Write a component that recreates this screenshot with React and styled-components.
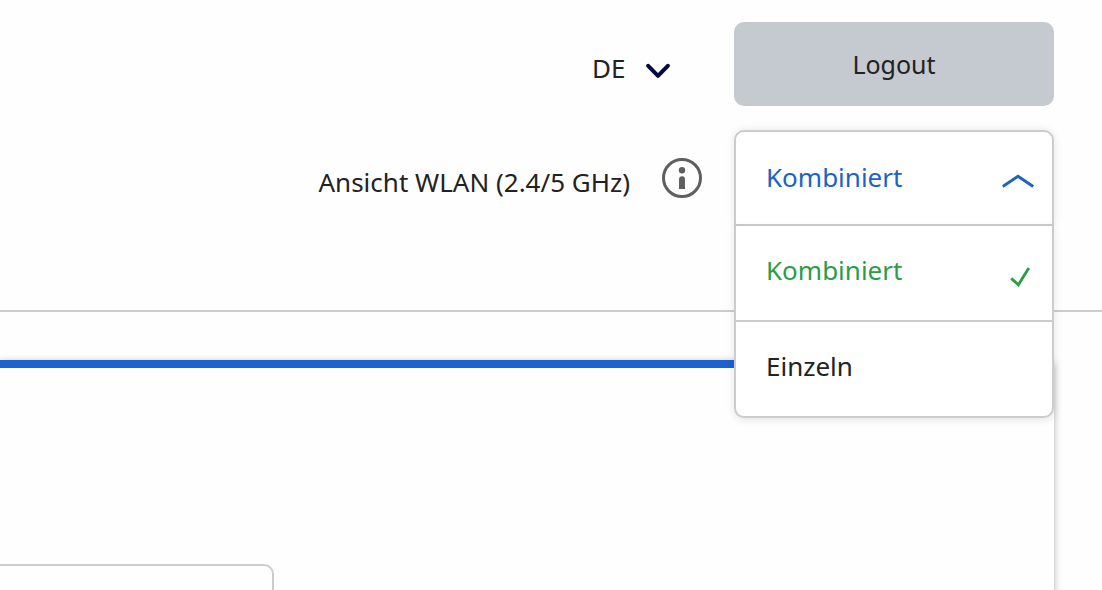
import { useState } from "react";
import styled, { createGlobalStyle } from "styled-components";

const views = ["Kombiniert", "Einzeln"];

export default function App() {
  const [open, setOpen] = useState(true);
  const [view, setView] = useState("Kombiniert");
  const choose = (name) => {
    setView(name);
    setOpen(false);
  };
  return (
    <>
      <GlobalStyle />
      <Page>
        <Header>
          <TopRow>
            <Language>
              <select aria-label="Sprache" defaultValue="DE">
                <option>DE</option>
                <option>FR</option>
                <option>IT</option>
                <option>EN</option>
              </select>
              <svg width="24" height="16" viewBox="0 0 24 16" fill="none" aria-hidden="true">
                <path
                  d="M2.2 2.8 12 12.8 21.8 2.8"
                  stroke="#020b41"
                  strokeWidth="4"
                  strokeLinecap="round"
                  strokeLinejoin="round"
                />
              </svg>
            </Language>
            <Logout type="button">Logout</Logout>
          </TopRow>
          <ViewRow>
            <ViewLabel id="view-label">Ansicht WLAN (2.4/5 GHz)</ViewLabel>
            <InfoButton type="button" aria-label="Info">
              <svg width="40" height="40" viewBox="0 0 40 40" aria-hidden="true">
                <circle cx="20" cy="20" r="18.5" fill="none" stroke="#5f5f5f" strokeWidth="3" />
                <circle cx="20" cy="12.3" r="3.2" fill="#5f5f5f" />
                <path d="M17 31V21.2a3 3 0 0 1 6 0V31z" fill="#5f5f5f" />
              </svg>
            </InfoButton>
            <Dropdown>
              <DropdownHead
                type="button"
                aria-haspopup="listbox"
                aria-expanded={open}
                aria-labelledby="view-label view-value"
                $open={open}
                onClick={() => setOpen(!open)}
              >
                <span id="view-value">{view}</span>
                <svg width="32" height="16" viewBox="0 0 32 16" fill="none" aria-hidden="true">
                  <path d="M.8 13.4 16 3.2 31.2 13.4" stroke="#1c63c4" strokeWidth="3" />
                </svg>
              </DropdownHead>
              {open && (
                <Menu role="listbox" aria-labelledby="view-label">
                  {views.map((name) => (
                    <Option
                      key={name}
                      type="button"
                      role="option"
                      aria-selected={name === view}
                      $selected={name === view}
                      onClick={() => choose(name)}
                    >
                      <span>{name}</span>
                      {name === view && (
                        <svg width="20" height="20" viewBox="0 0 20 20" fill="none" aria-hidden="true">
                          <path d="M1.2 11.4 8.4 17.8 18.8 1" stroke="#2a9d48" strokeWidth="2.8" />
                        </svg>
                      )}
                    </Option>
                  ))}
                </Menu>
              )}
            </Dropdown>
          </ViewRow>
        </Header>
        <Main>
          <Card>
            <Panel />
          </Card>
        </Main>
      </Page>
    </>
  );
}

const GlobalStyle = createGlobalStyle`
  * {
    box-sizing: border-box;
  }
  body {
    margin: 0;
    background: #fefefe;
    color: #222;
    font: 26px/36px "Noto Sans", "Open Sans", sans-serif;
  }
  button,
  select {
    padding: 0;
    border: 0;
    background: none;
    color: inherit;
    font: inherit;
    cursor: pointer;
  }
`;

const Page = styled.div`
  display: flex;
  flex-direction: column;
  height: 100vh;
  overflow: hidden;
`;

const Header = styled.header`
  display: flex;
  flex-direction: column;
  gap: 24px;
  padding: 22px 48px 84px 0;
  border-bottom: 2px solid #ccc;
`;

const TopRow = styled.div`
  display: flex;
  align-items: center;
  justify-content: flex-end;
  gap: 64px;
`;

const Language = styled.div`
  display: grid;
  align-items: center;
  width: 78px;
  padding-top: 8px;
  select {
    grid-area: 1 / 1;
    appearance: none;
  }
  svg {
    grid-area: 1 / 1;
    justify-self: end;
    margin-top: 6px;
    pointer-events: none;
  }
`;

const Logout = styled.button`
  width: 320px;
  height: 84px;
  border-radius: 10px;
  background: #c4cacf;
  font-size: 25px;
`;

const ViewRow = styled.div`
  display: flex;
  align-items: center;
  justify-content: flex-end;
  gap: 32px;
`;

const ViewLabel = styled.span`
  padding-top: 8px;
`;

const InfoButton = styled.button`
  display: flex;
`;

const Dropdown = styled.div`
  position: relative;
  width: 320px;
`;

const DropdownHead = styled.button`
  display: flex;
  align-items: center;
  justify-content: space-between;
  width: 100%;
  height: 96px;
  padding: 0 18px 0 30px;
  border: 2px solid #ccc;
  border-radius: ${({ $open }) => ($open ? "10px 10px 0 0" : "10px")};
  background: #fff;
  color: #1c63c4;
  box-shadow: 0 0 8px rgba(0, 0, 0, 0.1);
  span {
    padding-bottom: 2px;
  }
  svg {
    margin-top: 6px;
  }
`;

const Menu = styled.div`
  position: absolute;
  z-index: 1;
  top: 100%;
  left: 0;
  right: 0;
  border: 2px solid #ccc;
  border-top: 0;
  border-radius: 0 0 10px 10px;
  background: #fff;
  box-shadow: 0 2px 8px rgba(0, 0, 0, 0.1);
`;

const Option = styled.button`
  display: flex;
  align-items: center;
  justify-content: space-between;
  width: 100%;
  height: 94px;
  padding: 0 22px 0 30px;
  color: ${({ $selected }) => ($selected ? "#2a9d48" : "#222")};
  span {
    padding-bottom: 6px;
  }
  svg {
    margin-top: 8px;
  }
  & + & {
    height: 96px;
    border-top: 2px solid #ccc;
  }
`;

const Main = styled.main`
  display: flex;
  flex: 1;
  padding: 48px 48px 0 0;
`;

/* the card runs on below the fold */
const Card = styled.section`
  flex: 1;
  margin-bottom: -16px;
  padding-top: 196px;
  border-top: 8px solid #1b62d2;
  background: #fefefe;
  box-shadow: 0 2px 8px rgba(0, 0, 0, 0.3);
`;

const Panel = styled.div`
  width: 274px;
  height: 100%;
  border: 2px solid #ccc;
  border-width: 2px 2px 0 0;
  border-radius: 0 10px 0 0;
`;
